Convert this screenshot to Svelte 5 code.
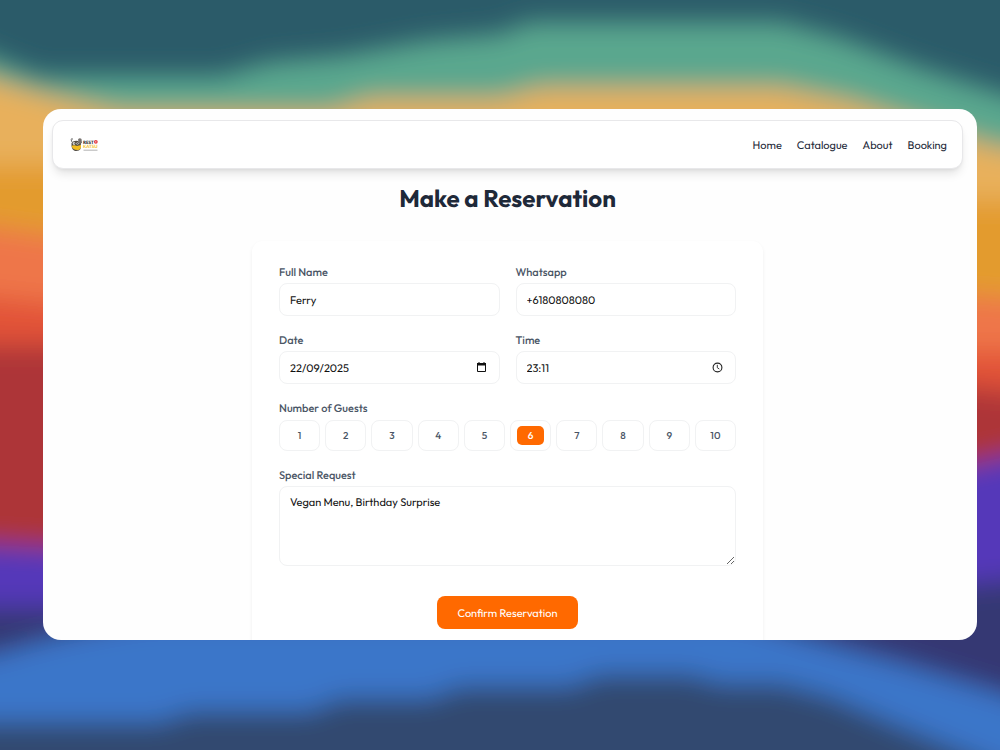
<script>
    const links = ['Home', 'Catalogue', 'About', 'Booking'];
    const guestOptions = [1, 2, 3, 4, 5, 6, 7, 8, 9, 10];

    let name = 'Ferry';
    let whatsapp = '+6180808080';
    let date = '22/09/2025';
    let time = '23:11';
    let guests = 6;
    let request = 'Vegan Menu, Birthday Surprise';

    function handleSubmit() {
        console.log({ name, whatsapp, date, time, guests, request });
    }
</script>

<div class="page">
    <svg class="backdrop" viewBox="0 0 1000 750" preserveAspectRatio="none" aria-hidden="true">
        <defs>
            <filter id="soft" x="-10%" y="-10%" width="120%" height="120%">
                <feGaussianBlur stdDeviation="13" />
            </filter>
        </defs>
        <rect width="1000" height="750" fill="#2b5b69" />
        <g filter="url(#soft)">
            <path fill="#5aa78e" d="M-60 34 L0 60 L40 76 L220 76 L270 62 L340 56 L430 40 L500 34 L530 22 H780 L840 38 L920 68 L1060 112 V850 H-60Z" />
            <path fill="#e8b05b" d="M-60 62 L0 82 L50 96 L120 112 H330 L370 99 H500 L540 88 H780 L850 102 L920 124 L1000 148 L1060 154 V850 H-60Z" />
            <path fill="#e39b2e" d="M-60 165 H100 V200 H900 L1000 200 H1060 V850 H-60Z" />
            <path fill="#ee764a" d="M-60 220 L100 242 V290 H900 L1060 302 V850 H-60Z" />
            <path fill="#e25239" d="M-60 292 L100 308 V350 H900 L1060 352 V850 H-60Z" />
            <path fill="#ad3438" d="M-60 345 H100 V380 H900 L1060 396 V850 H-60Z" />
            <path fill="#5537b9" d="M-60 542 L100 550 V480 H900 L1060 444 V850 H-60Z" />
            <path fill="#353873" d="M-60 607 H100 V590 H900 L1060 575 V850 H-60Z" />
            <path fill="#3a76c9" d="M-60 664 L0 654 Q60 634 150 620 H740 Q830 646 900 664 L1000 694 L1060 716 V850 H-60Z" />
            <path fill="#30486f" d="M-60 722 H160 L190 711 H310 L340 698 H430 L460 686 H570 L600 674 H690 L720 683 H780 L830 696 L900 726 L1060 792 V850 H-60Z" />
        </g>
    </svg>

    <div class="window">
        <nav>
            <a class="logo" href="#home" aria-label="Resto Katsu">
                <svg width="28" height="14" viewBox="0 0 56 28">
                    <g transform="scale(2)">
                        <path d="M2 4 L1 1.5 M1 1 H3" stroke="#444" stroke-width=".8" fill="none" />
                        <path d="M1.5 5 Q4 2 8 3 L11 5 L10.5 11 Q9 13.5 5 13 Q2 12 1.5 8Z" fill="#555046" />
                        <path d="M8 1.5 Q9.5 -.5 11.5 1 L12 5 L9 6Z" fill="#77736f" />
                        <circle cx="4" cy="5.5" r="1.2" fill="#fff" />
                        <circle cx="7.5" cy="5.5" r="1.1" fill="#fff" />
                        <circle cx="4.2" cy="5.6" r=".5" fill="#222" />
                        <circle cx="7.4" cy="5.6" r=".5" fill="#222" />
                        <path d="M1.5 8 Q4 6.5 7 8 L11 7 Q11.5 11 8.5 12 Q3 12.5 1.5 8Z" fill="#f2bd20" />
                        <circle cx="25.8" cy="3.8" r="1.9" fill="#e33b42" />
                        <circle cx="25.8" cy="3.8" r=".6" fill="#fff" />
                        <path d="M13.5 12.2 H27.5" stroke="#aaa" stroke-width=".9" />
                    </g>
                    <text x="26" y="11" class="logo-top">REST</text>
                    <text x="26" y="20" class="logo-bottom">KATSU</text>
                </svg>
            </a>
            <div class="links">
                {#each links as link}
                    <a href="#{link.toLowerCase()}">{link}</a>
                {/each}
            </div>
        </nav>

        <h1>Make a Reservation</h1>

        <form on:submit|preventDefault={handleSubmit}>
            <div class="row">
                <div class="field">
                    <label for="name">Full Name</label>
                    <input id="name" class="box" type="text" bind:value={name} />
                </div>
                <div class="field">
                    <label for="whatsapp">Whatsapp</label>
                    <input id="whatsapp" class="box" type="tel" bind:value={whatsapp} />
                </div>
            </div>

            <div class="row">
                <div class="field">
                    <label for="date">Date</label>
                    <div class="box picker">
                        <input id="date" type="text" bind:value={date} />
                        <button type="button" aria-label="Open calendar">
                            <svg width="11" height="11" viewBox="0 0 11 11">
                                <path d="M1.5 1.5 H9.5 V9.5 H1.5Z" fill="none" stroke="#111" />
                                <path d="M1 1 H10 V3.5 H1Z M2.5 0 H3.5 V2 H2.5Z M7.5 0 H8.5 V2 H7.5Z" fill="#111" />
                            </svg>
                        </button>
                    </div>
                </div>
                <div class="field">
                    <label for="time">Time</label>
                    <div class="box picker">
                        <input id="time" type="text" bind:value={time} />
                        <button type="button" aria-label="Open clock">
                            <svg width="11" height="11" viewBox="0 0 11 11">
                                <circle cx="5.5" cy="5.5" r="4.4" fill="none" stroke="#222" stroke-width="1.1" />
                                <path d="M5.3 2.8 V5.7 L7.3 7" fill="none" stroke="#222" stroke-width=".9" />
                            </svg>
                        </button>
                    </div>
                </div>
            </div>

            <fieldset>
                <legend>Number of Guests</legend>
                <div class="guests">
                    {#each guestOptions as option}
                        <label class="guest">
                            <input type="radio" name="guests" value={option} bind:group={guests} />
                            <span>{option}</span>
                        </label>
                    {/each}
                </div>
            </fieldset>

            <div class="field">
                <label for="request">Special Request</label>
                <textarea id="request" class="box" bind:value={request}></textarea>
            </div>

            <button class="submit" type="submit">Confirm Reservation</button>
        </form>
    </div>
</div>

<style>
    :global(body) {
        margin: 0;
    }

    .page {
        position: relative;
        display: flex;
        box-sizing: border-box;
        height: 100vh;
        padding: 109px 23px 110px 43px;
        overflow: hidden;
        font-family: Outfit, Lato, sans-serif;
        font-size: 11px;
        text-rendering: geometricPrecision;
    }

    .backdrop {
        position: absolute;
        inset: 0;
        width: 100%;
        height: 100%;
    }

    .window {
        position: relative;
        flex: 1;
        box-sizing: border-box;
        padding: 11px 14px 0 9px;
        overflow: hidden auto;
        scrollbar-width: none;
        border-radius: 18px;
        background: #fefefe;
    }

    nav {
        display: flex;
        align-items: center;
        justify-content: space-between;
        box-sizing: border-box;
        height: 49px;
        padding: 0 15px 0 17px;
        border: 1px solid #e8e8ea;
        border-radius: 11px;
        background: #fff;
        box-shadow: 0 7px 10px -2px rgba(0, 0, 0, 0.1), 0 2px 4px -2px rgba(0, 0, 0, 0.1);
    }

    .logo svg {
        display: block;
    }

    .logo-top,
    .logo-bottom {
        font-family: Lato, sans-serif;
        font-size: 9px;
        font-weight: 900;
        fill: #222;
    }

    .logo-bottom {
        fill: #f3c22f;
    }

    .links {
        display: flex;
        gap: 15px;
        line-height: 16px;
    }

    .links a {
        color: #1e2939;
        text-decoration: none;
    }

    h1 {
        margin: 14px 0 26px;
        color: #1e2939;
        font-size: 24px;
        font-weight: 700;
        line-height: 32px;
        text-align: center;
    }

    form {
        display: flex;
        flex-direction: column;
        gap: 16px;
        box-sizing: border-box;
        max-width: 511px;
        margin: 0 auto;
        padding: 23px 27px 27px;
        border-radius: 11px;
        background: #fff;
        box-shadow: 0 2px 4px rgba(0, 0, 0, 0.06);
    }

    .row {
        display: grid;
        grid-template-columns: 1fr 1fr;
        gap: 16px;
    }

    .field {
        display: flex;
        flex-direction: column;
        gap: 3px;
    }

    label,
    legend {
        color: #4a5565;
        font-weight: 500;
        line-height: 16px;
    }

    input,
    textarea,
    button {
        font: inherit;
        text-rendering: inherit;
    }

    .box {
        box-sizing: border-box;
        width: 100%;
        height: 33px;
        padding: 0 10px;
        border: 1px solid #f1f2f3;
        border-radius: 8px;
        outline: none;
        background: #fff;
        color: #111;
    }

    .picker {
        display: flex;
        align-items: center;
        padding-right: 12px;
    }

    .picker input {
        flex: 1;
        min-width: 0;
        padding: 0;
        border: none;
        outline: none;
        background: none;
        color: inherit;
    }

    .picker button {
        display: flex;
        padding: 0;
        border: none;
        background: none;
        cursor: pointer;
    }

    textarea.box {
        display: block;
        height: 80px;
        padding: 7px 10px;
        line-height: 16px;
        resize: vertical;
    }

    fieldset {
        min-width: 0;
        margin: 0;
        padding: 0;
        border: none;
    }

    legend {
        padding: 0;
        margin-bottom: 4px;
    }

    .guests {
        display: grid;
        grid-template-columns: repeat(10, 1fr);
        gap: 5px;
    }

    .guest {
        position: relative;
        display: flex;
        align-items: center;
        justify-content: center;
        box-sizing: border-box;
        height: 31px;
        border: 1px solid #f1f2f3;
        border-radius: 8px;
        font-size: 10px;
        cursor: pointer;
    }

    .guest input {
        position: absolute;
        opacity: 0;
    }

    .guest span {
        width: 27px;
        border-radius: 5px;
        line-height: 19px;
        text-align: center;
    }

    .guest input:checked + span {
        background: #ff6900;
        color: #fff;
    }

    .submit {
        align-self: center;
        height: 33px;
        margin-top: 14px;
        padding: 0 20px;
        border: none;
        border-radius: 8px;
        background: #ff6900;
        color: #fff;
        cursor: pointer;
    }
</style>
